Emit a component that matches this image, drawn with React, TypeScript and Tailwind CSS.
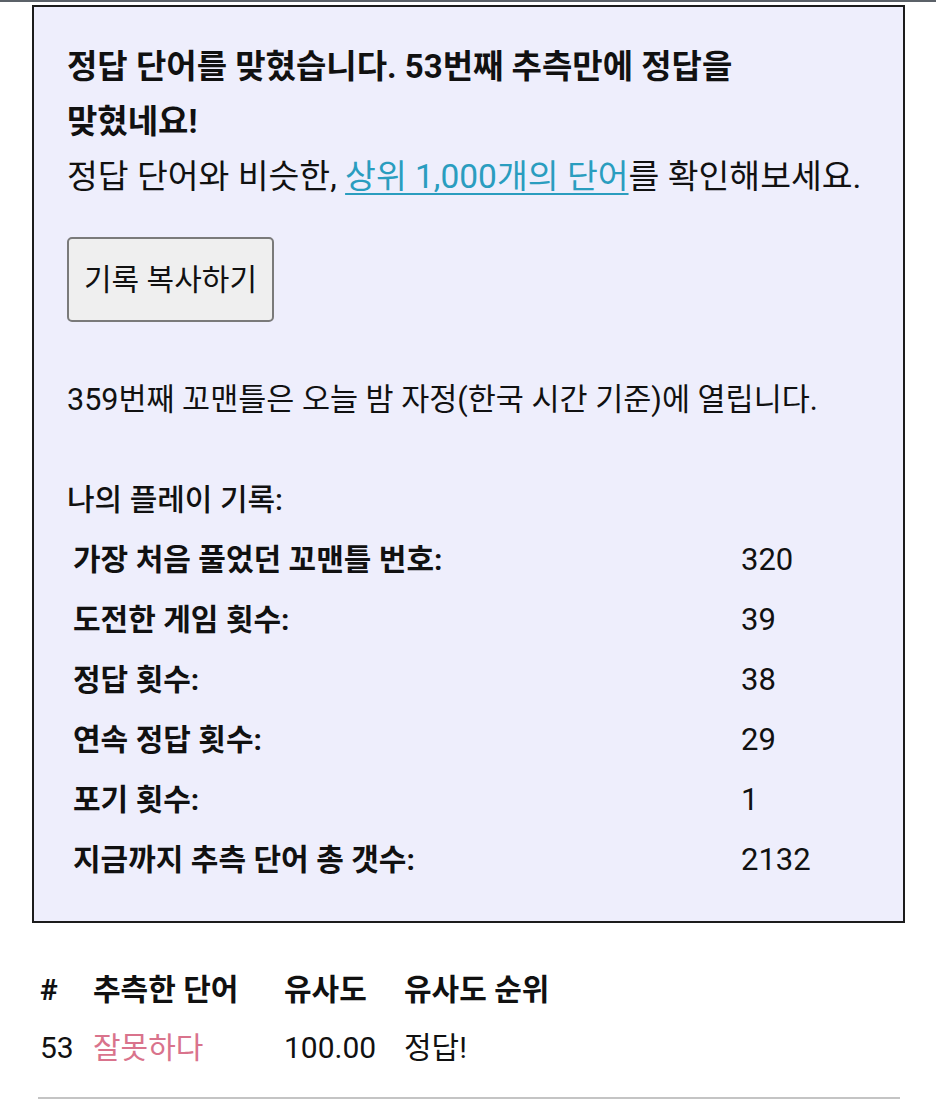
import React from 'react';

const stats: [string, string][] = [
  ['가장 처음 풀었던 꼬맨틀 번호:', '320'],
  ['도전한 게임 횟수:', '39'],
  ['정답 횟수:', '38'],
  ['연속 정답 횟수:', '29'],
  ['포기 횟수:', '1'],
  ['지금까지 추측 단어 총 갯수:', '2132'],
];

export default function App() {
  return (
    <div className="min-h-screen bg-white text-[#111] font-['Roboto','Noto_Sans_CJK_KR',sans-serif] break-keep">
      <div className="h-[2px] bg-[#5b6168]" />

      <div className="ml-[32px] mr-[31px] mt-[3px] border-2 border-[#1c1c1c] bg-[#eeeefc] pl-[33px] pr-[28px] pt-[32px] pb-[31px]">
        <p className="max-w-[740px] text-[33px] leading-[55px] font-bold">
          정답 단어를 맞혔습니다. 53번째 추측만에 정답을 맞혔네요!
        </p>
        <p className="text-[33.5px] leading-[55px]">
          정답 단어와 비슷한,{' '}
          <a href="#" className="text-[#2a9dbf] underline underline-offset-[5px] decoration-[2px]">
            상위 1,000개의 단어
          </a>
          를 확인해보세요.
        </p>

        <button className="mt-[33px] h-[85px] w-[207px] rounded-[5px] border-2 border-[#7a7a7a] bg-[#efefef] text-[30px] text-[#111]">
          기록 복사하기
        </button>

        <p className="mt-[50px] text-[30.5px] leading-[55px]">
          359번째 꼬맨틀은 오늘 밤 자정(한국 시간 기준)에 열립니다.
        </p>

        <p className="mt-[45px] text-[30px] leading-[55px] font-medium">나의 플레이 기록:</p>
        <div className="mt-[3px] grid grid-cols-[674px_auto]">
          {stats.map(([label, value]) => (
            <React.Fragment key={label}>
              <div className="pl-[6px] text-[30px] leading-[60px] font-bold">{label}</div>
              <div className="text-[31px] leading-[60px]">{value}</div>
            </React.Fragment>
          ))}
        </div>
      </div>

      <div className="ml-[38px] mr-[36px] mt-[38px] border-b-2 border-[#c4c4c4] pb-[20px]">
        <div className="grid grid-cols-[55px_191px_120px_auto] text-[30px] leading-[58px]">
          <div className="pl-[2px] font-bold">#</div>
          <div className="font-bold">추측한 단어</div>
          <div className="font-bold">유사도</div>
          <div className="font-bold">유사도 순위</div>
          <div className="pl-[2px]">53</div>
          <div className="text-[#d9738c]">잘못하다</div>
          <div>100.00</div>
          <div>정답!</div>
        </div>
      </div>
    </div>
  );
}
